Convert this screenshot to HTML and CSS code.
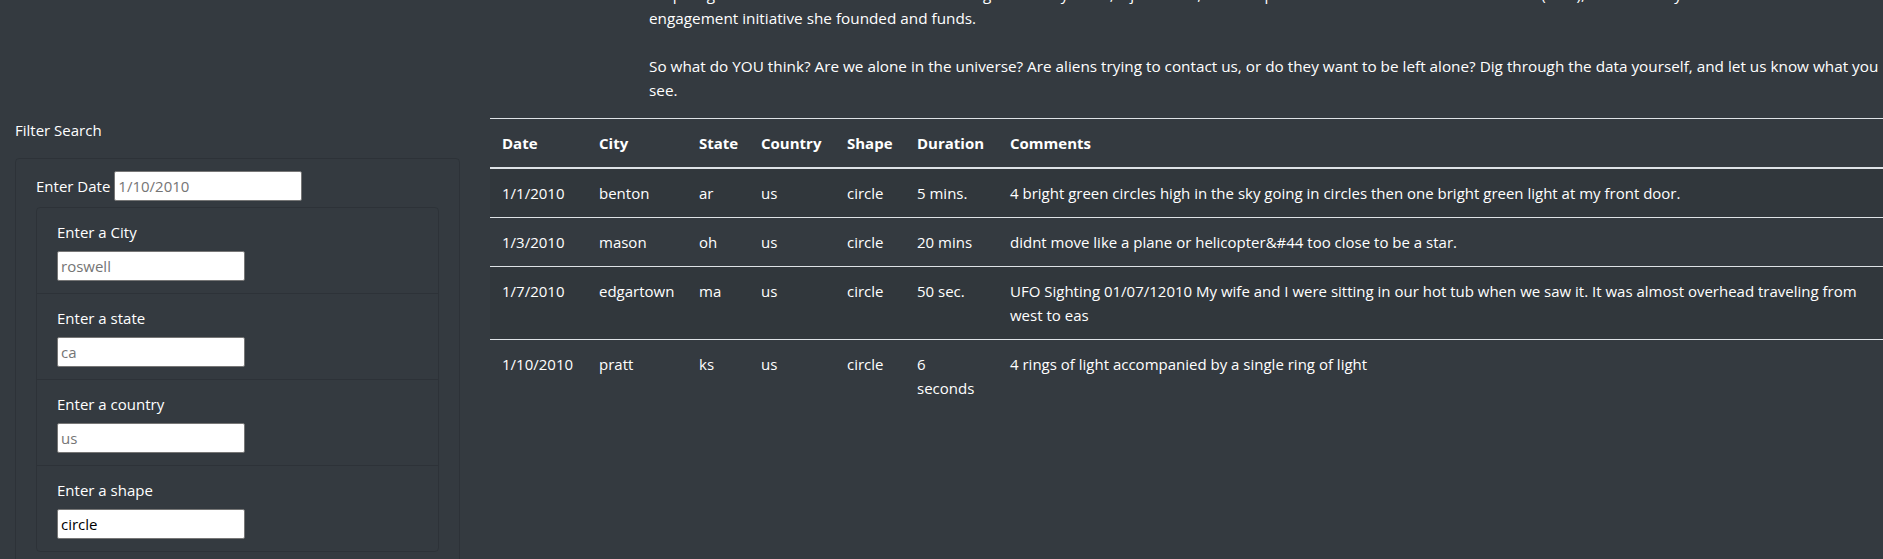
FILE: index.html
```html
<!DOCTYPE html>
<html lang="en">
<head>
<meta charset="utf-8">
<title>UFO Sightings</title>
<link rel="stylesheet" href="styles.css">
</head>
<body>
<div class="page">
  <section class="intro">
    <p class="intro-text">Help us get to the bottom of this: the data was gathered by Dana, a journalist, and her partner at the Alien Research Network (ARN), a community<br>engagement initiative she founded and funds.<br><br>So what do YOU think? Are we alone in the universe? Are aliens trying to contact us, or do they want to be left alone? Dig through the data yourself, and let us know what you<br>see.</p>
  </section>
  <div class="content-row">
    <aside class="sidebar">
      <p class="filter-title">Filter Search</p>
      <div class="card">
        <div class="card-item">
          <div class="date-row">
            <label for="datetime">Enter Date</label>
            <input class="field" id="datetime" type="text" placeholder="1/10/2010">
          </div>
          <ul class="filters">
            <li class="filter-item">
              <label for="city">Enter a City</label>
              <input class="field" id="city" type="text" placeholder="roswell">
            </li>
            <li class="filter-item">
              <label for="state">Enter a state</label>
              <input class="field" id="state" type="text" placeholder="ca">
            </li>
            <li class="filter-item">
              <label for="country">Enter a country</label>
              <input class="field" id="country" type="text" placeholder="us">
            </li>
            <li class="filter-item">
              <label for="shape">Enter a shape</label>
              <input class="field" id="shape" type="text" placeholder="circle" value="circle">
            </li>
          </ul>
        </div>
      </div>
    </aside>
    <main class="main">
      <table class="ufo-table">
        <thead>
          <tr>
            <th class="c-date">Date</th>
            <th class="c-city">City</th>
            <th class="c-state">State</th>
            <th class="c-country">Country</th>
            <th class="c-shape">Shape</th>
            <th class="c-duration">Duration</th>
            <th class="c-comments">Comments</th>
          </tr>
        </thead>
        <tbody>
          <tr>
            <td>1/1/2010</td><td>benton</td><td>ar</td><td>us</td><td>circle</td><td>5 mins.</td>
            <td>4 bright green circles high in the sky going in circles then one bright green light at my front door.</td>
          </tr>
          <tr>
            <td>1/3/2010</td><td>mason</td><td>oh</td><td>us</td><td>circle</td><td>20 mins</td>
            <td>didnt move like a plane or helicopter&amp;#44 too close to be a star.</td>
          </tr>
          <tr>
            <td>1/7/2010</td><td>edgartown</td><td>ma</td><td>us</td><td>circle</td><td>50 sec.</td>
            <td>UFO Sighting 01/07/12010 My wife and I were sitting in our hot tub when we saw it. It was almost overhead traveling from west to eas</td>
          </tr>
          <tr>
            <td>1/10/2010</td><td>pratt</td><td>ks</td><td>us</td><td>circle</td><td><span class="min-wrap">6 seconds</span></td>
            <td>4 rings of light accompanied by a single ring of light</td>
          </tr>
        </tbody>
      </table>
    </main>
  </div>
</div>
</body>
</html>
```
FILE: styles.css
```css
* {
  box-sizing: border-box;
}

html, body {
  margin: 0;
  padding: 0;
  background: #343a40;
  overflow: hidden;
}

body {
  font-family: "Open Sans", "Noto Sans", "Liberation Sans", sans-serif;
  font-size: 15px;
  line-height: 24px;
  color: #fff;
}

.page {
  margin-top: -18px;
}

.intro {
  padding-left: 649px;
}

.intro-text {
  margin: 0 0 16px 0;
  font-size: 15.3px;
  white-space: nowrap;
}

.content-row {
  display: flex;
  align-items: flex-start;
}

.sidebar {
  width: 475px;
  flex: 0 0 475px;
  padding: 0 15px;
}

.filter-title {
  margin: 0 0 16px 0;
}

.card {
  width: 445px;
  border: 1px solid rgba(0, 0, 0, 0.125);
  border-radius: 4px;
}

.card-item {
  padding: 12px 20px;
}

.date-row {
  display: flex;
  align-items: center;
  gap: 4px;
  height: 30px;
}

.field {
  width: 188px;
  height: 30px;
  border: 1px solid #767676;
  border-radius: 2px;
  padding: 1px 3px;
  font-family: "Open Sans", "Noto Sans", "Liberation Sans", sans-serif;
  font-size: 15px;
  color: #000;
  background: #fff;
}

.field::placeholder {
  color: #757575;
}

.filters {
  list-style: none;
  margin: 6px 0 0 0;
  padding: 0;
  border: 1px solid rgba(0, 0, 0, 0.125);
  border-radius: 4px;
}

.filter-item {
  display: flex;
  flex-direction: column;
  align-items: flex-start;
  gap: 7px;
  padding: 12px 20px;
  border-top: 1px solid rgba(0, 0, 0, 0.125);
}

.filter-item:first-child {
  border-top: none;
}

.main {
  flex: 1 1 auto;
  padding-left: 15px;
}

.ufo-table {
  width: 100%;
  border-collapse: collapse;
  table-layout: fixed;
  color: #fff;
}

.ufo-table th,
.ufo-table td {
  padding: 12px;
  text-align: left;
  vertical-align: top;
  border-top: 1px solid #dee2e6;
}

.ufo-table th {
  font-weight: 700;
  vertical-align: bottom;
  border-bottom: 2px solid #dee2e6;
}

.ufo-table tbody tr:nth-child(odd) {
  background: rgba(0, 0, 0, 0.05);
}

.ufo-table tbody tr:first-child td {
  border-top: none;
}

.c-date { width: 97px; }
.c-city { width: 100px; }
.c-state { width: 62px; }
.c-country { width: 86px; }
.c-shape { width: 70px; }
.c-duration { width: 93px; }
.c-comments { width: auto; }

.min-wrap {
  display: inline-block;
  width: min-content;
}
```
